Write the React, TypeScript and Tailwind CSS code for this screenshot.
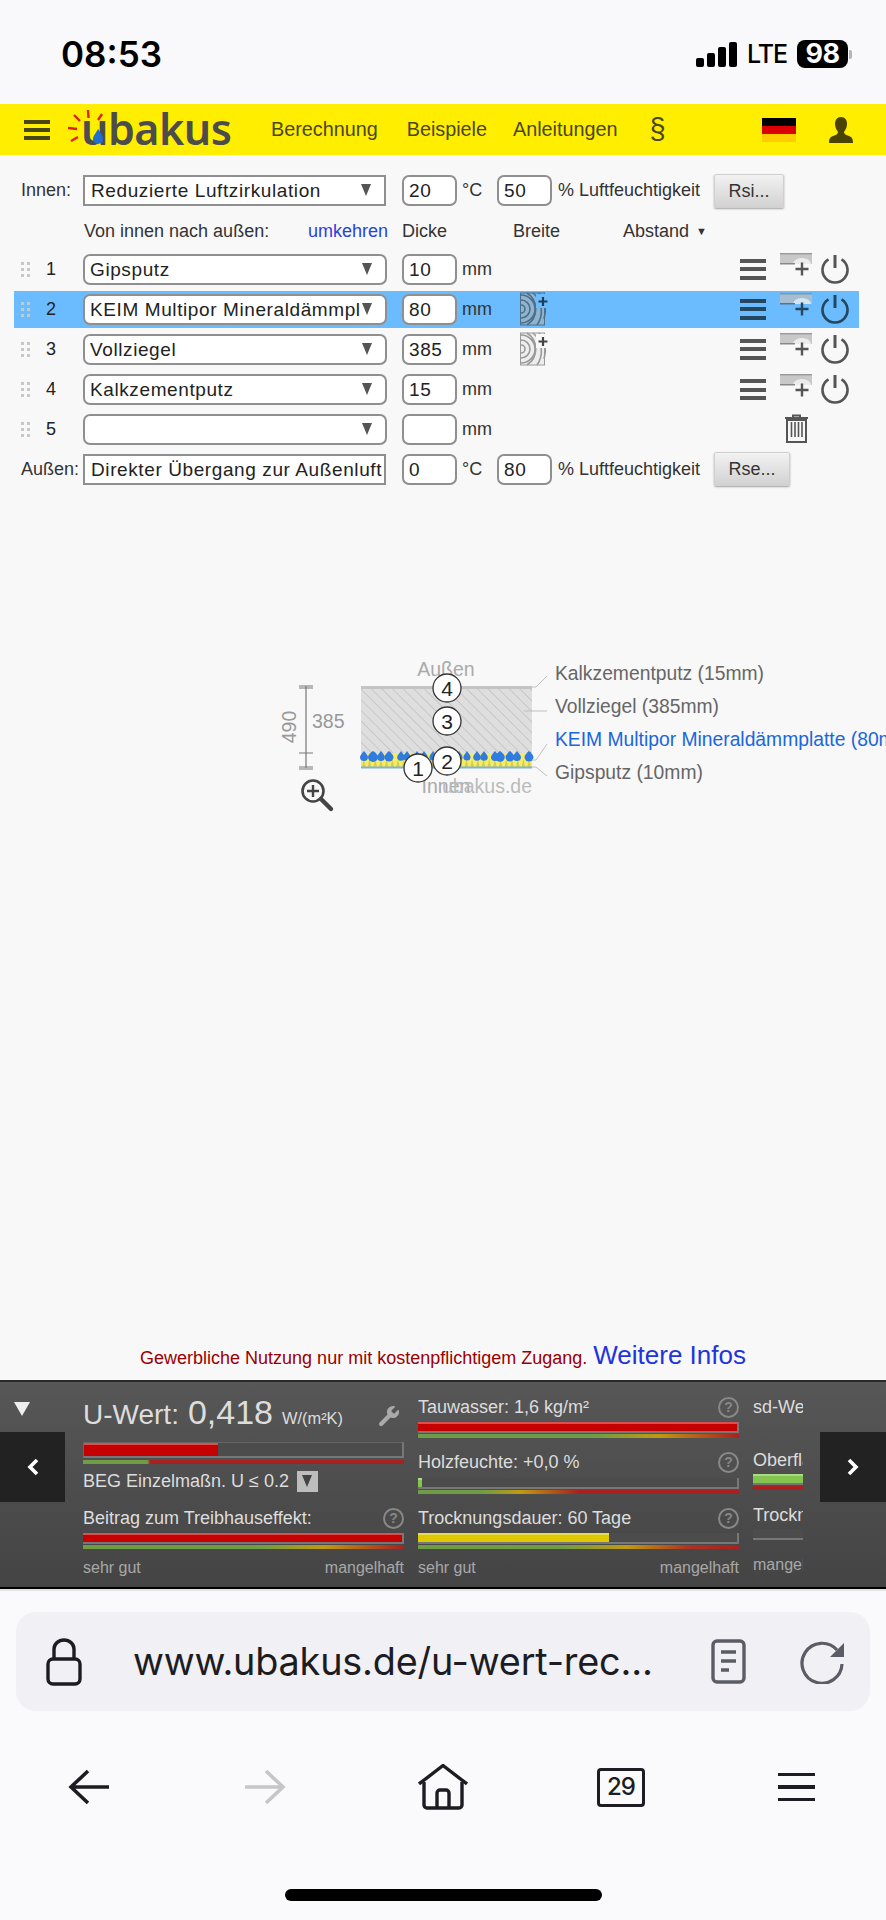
import React from "react";

const SANS = "font-['Liberation_Sans',Arial,sans-serif]";

function Dots() {
  return (
    <div className="grid grid-cols-2 gap-x-[3px] gap-y-[3px] w-[9px] ml-[7px] shrink-0">
      {[0, 1, 2, 3, 4, 5].map((i) => (
        <div key={i} className="w-[3px] h-[3px] bg-[#c8c8c8]" />
      ))}
    </div>
  );
}

function Arrow({ boxed }: { boxed?: boolean }) {
  return (
    <span
      className={`absolute w-0 h-0 border-l-[5.5px] border-r-[5.5px] border-t-[12px] border-l-transparent border-r-transparent border-t-[#555] ${
        boxed ? "right-[15px] top-[9px]" : "right-[13px] top-[7px]"
      }`}
    />
  );
}

function LayerSelect({ value }: { value: string }) {
  return (
    <div className="relative w-[304px] h-[31px] rounded-[7px] border-2 border-[#8f8f8f] bg-white pl-[5px] text-[19px] leading-[27px] tracking-[0.6px] text-[#222] whitespace-nowrap overflow-hidden shrink-0">
      {value}
      <Arrow />
    </div>
  );
}

function BoxSelect({ value }: { value: string }) {
  return (
    <div className="relative w-[303px] h-[31px] border-2 border-[#8f8f8f] bg-white pl-[6px] text-[19px] leading-[28px] tracking-[0.6px] text-[#222] whitespace-nowrap overflow-hidden shrink-0">
      {value}
    </div>
  );
}

function NumInput({ value }: { value: string }) {
  return (
    <div className="w-[55px] h-[31px] rounded-[7px] border-2 border-[#8f8f8f] bg-white pl-[5px] text-[19px] leading-[27px] tracking-[0.6px] text-[#222] shrink-0">
      {value}
    </div>
  );
}

function GrayButton({ label, w }: { label: string; w: string }) {
  return (
    <div className={`${w} h-[34px] rounded-[2px] bg-gradient-to-b from-[#f2f2f2] to-[#d2d2d2] border border-[#d0d0d0] shadow-[0_1px_2px_rgba(0,0,0,0.35)] text-center text-[18px] leading-[32px] text-[#333] shrink-0`}>
      {label}
    </div>
  );
}

function Wood({ active }: { active: boolean }) {
  const c = active ? "#4e6f88" : "#9a9a9a";
  return (
    <svg width="30" height="34" viewBox="0 0 30 34" className="shrink-0">
      <rect x="0.5" y="1" width="24" height="32" fill={active ? "#8fb4d2" : "#eeeeee"} stroke={c} />
      <path d="M1 13a4 4 0 0 1 0 8M1 8a9 9 0 0 1 0 18M1 3a14 14 0 0 1 0 28M7 1a19 19 0 0 1 0 32M13 1a24 24 0 0 1 4 32M19 1a28 28 0 0 1 5 26" fill="none" stroke={c} strokeWidth="1.6" />
      <rect x="16" y="2" width="14" height="14" fill={active ? "#6bbcff" : "#f8f8f8"} />
      <path d="M23 5v9M18.5 9.5h9" stroke={active ? "#1f3d55" : "#444"} strokeWidth="2.2" />
    </svg>
  );
}

function Actions({ active }: { active: boolean }) {
  const c = active ? "#24465f" : "#555555";
  return (
    <div className="flex items-center ml-[7px]">
      <div className="flex flex-col gap-[4.5px] w-[26px]">
        <div className={`h-[4px] ${active ? "bg-[#24465f]" : "bg-[#555]"}`} />
        <div className={`h-[4px] ${active ? "bg-[#24465f]" : "bg-[#555]"}`} />
        <div className={`h-[4px] ${active ? "bg-[#24465f]" : "bg-[#555]"}`} />
      </div>
      <svg width="32" height="28" viewBox="0 0 32 28" className="ml-[14px] -mt-[4px]">
        <rect x="0" y="0" width="32" height="11" fill={active ? "#a6bed2" : "#c8c8c8"} />
        <rect x="0" y="0" width="32" height="1.4" fill={active ? "#7d95a8" : "#999"} />
        <path d="M13 11a9 6 0 0 1 18 0z" fill={active ? "#d4e4f0" : "#ececec"} />
        <rect x="0" y="10" width="15" height="1.5" fill={active ? "#55758e" : "#888"} />
        <path d="M22 9.5v13M15.5 16h13" stroke={c} strokeWidth="2.4" />
      </svg>
      <svg width="28" height="31" viewBox="0 0 28 31" className="ml-[9px]">
        <path d="M7.5 5.3A12.5 12.5 0 1 0 20.5 5.3" fill="none" stroke={c} strokeWidth="2.6" />
        <path d="M14 1v13" stroke={c} strokeWidth="3" />
      </svg>
    </div>
  );
}

function Trash() {
  return (
    <svg width="23" height="29" viewBox="0 0 23 29" className="ml-[52px] -mt-[2px]">
      <path d="M0 4h23M8 4V1.5h7V4" stroke="#555" strokeWidth="2" fill="none" />
      <rect x="2" y="6" width="19" height="22" fill="none" stroke="#555" strokeWidth="2" />
      <path d="M6.5 8v15M10 8v15M13.5 8v15M17 8v15" stroke="#555" strokeWidth="1.6" />
    </svg>
  );
}

const rows = [
  { n: "1", name: "Gipsputz", d: "10" },
  { n: "2", name: "KEIM Multipor Mineraldämmpl", d: "80", active: true, wood: true },
  { n: "3", name: "Vollziegel", d: "385", wood: true },
  { n: "4", name: "Kalkzementputz", d: "15" },
  { n: "5", name: "", d: "", empty: true },
];

function LayerRow({ r }: { r: (typeof rows)[number] }) {
  return (
    <div className="h-[40.2px] flex items-center">
      <div className={`ml-[14px] w-[845px] h-[37px] flex items-center ${r.active ? "bg-[#6bbcff]" : ""}`}>
        <Dots />
        <div className="ml-[16px] w-[37px] shrink-0 text-[18px] text-[#222]">{r.n}</div>
        <LayerSelect value={r.name} />
        <div className="ml-[15px]"><NumInput value={r.d} /></div>
        <div className="ml-[5px] w-[51px] shrink-0 text-[18px] text-[#333]">mm</div>
        <div className="w-[220px] pl-[7px] shrink-0 h-[37px] flex items-center">
          {r.wood ? <Wood active={!!r.active} /> : null}
        </div>
        {r.empty ? <Trash /> : <Actions active={!!r.active} />}
      </div>
    </div>
  );
}

const drops: [number, number][] = [
  [364, 4], [373, 5], [381, 3.9], [389, 4.5], [401, 3.8], [407, 3.8], [417, 3.6], [424, 3.8], [433, 3.6], [459, 3.6], [467, 3.6], [477, 3.8], [484, 3.8], [495, 4], [500, 4.8], [510, 4.5], [517, 4], [529, 4.5],
];

function Circle({ x, y, t }: { x: number; y: number; t: string }) {
  return (
    <g>
      <circle cx={x} cy={y} r="14" fill="#fff" stroke="#333" strokeWidth="1.3" />
      <text x={x} y={y + 7.5} textAnchor="middle" fontSize="21" fill="#222">{t}</text>
    </g>
  );
}

function Diagram() {
  const teeth = Array.from({ length: 30 }, (_, i) => 361 + i * 5.7);
  return (
    <svg width="616" height="170" viewBox="270 650 616 170" className="ml-[270px] block" fontFamily="'Liberation Sans',Arial,sans-serif">
      <defs>
        <pattern id="hatch" width="7.5" height="7.5" patternUnits="userSpaceOnUse" patternTransform="rotate(-45)">
          <rect width="7.5" height="7.5" fill="#dedede" />
          <path d="M0 0v7.5" stroke="#bcbcbc" strokeWidth="1.3" />
        </pattern>
      </defs>
      <text x="446" y="676" textAnchor="middle" fontSize="19.5" fill="#aaa">Außen</text>
      <rect x="361" y="686" width="171" height="3" fill="#c4c4c4" />
      <rect x="361" y="689" width="171" height="64" fill="url(#hatch)" />
      <rect x="361" y="753" width="171" height="14" fill="#f4ec62" />
      {teeth.map((x) => (
        <path key={x} d={`M${x + 1} 767l1.8 -8l1.8 8z`} fill="#d8cc50" />
      ))}
      <rect x="361" y="766.5" width="171" height="2" fill="#7eb4d8" />
      {drops.map(([x, r], i) => (
        <path key={i} d={`M${x} 751C${x + r * 0.4} ${757 - r} ${x + r} ${757 - r * 0.4} ${x + r} 757a${r} ${r} 0 1 1 ${-2 * r} 0C${x - r} ${757 - r * 0.4} ${x - r * 0.4} ${757 - r} ${x} 751z`} fill="#2f7be0" />
      ))}
      <path d="M306 686v82M299 686h14M299 688h14M299 753h14M299 767h14M299 769h14" stroke="#777" strokeWidth="1.2" fill="none" />
      <text x="0" y="0" fontSize="19.5" fill="#999" textAnchor="middle" transform="translate(296 727) rotate(-90)">490</text>
      <text x="312" y="728" fontSize="19.5" fill="#999">385</text>
      <text x="446" y="793" textAnchor="middle" fontSize="19.5" fill="#aaa">Innen</text>
      <text x="532" y="793" textAnchor="end" fontSize="19.5" fill="#bbb">ubakus.de</text>
      <circle cx="313" cy="791" r="10.5" fill="none" stroke="#444" strokeWidth="2.6" />
      <path d="M313 785v12M307 791h12" stroke="#444" strokeWidth="2.4" />
      <path d="M321 799l10 10" stroke="#444" strokeWidth="4.4" strokeLinecap="round" />
      <path d="M532 687h4l11 -11M524 711h23M532 760h4l11 -16M532 767h4l11 9" stroke="#c0c0c0" strokeWidth="1" fill="none" />
      <Circle x={447} y={688} t="4" />
      <Circle x={447} y={721} t="3" />
      <Circle x={447} y={761} t="2" />
      <Circle x={418} y={768} t="1" />
      <text x="555" y="680" fontSize="19.3" fill="#666">Kalkzementputz (15mm)</text>
      <text x="555" y="713" fontSize="19.3" fill="#666">Vollziegel (385mm)</text>
      <text x="555" y="746" fontSize="19.3" fill="#1a66dd">KEIM Multipor Mineraldämmplatte (80mm)</text>
      <text x="555" y="779" fontSize="19.3" fill="#666">Gipsputz (10mm)</text>
    </svg>
  );
}

function Help() {
  return (
    <div className="w-[21px] h-[21px] rounded-full border-2 border-[#888] text-[#888] text-[14px] font-bold leading-[17px] text-center shrink-0">?</div>
  );
}

function Meter({ pct, kind, scale }: { pct: number; kind: "red" | "yellow" | "green"; scale: string }) {
  const fill =
    kind === "red"
      ? "bg-[#c40000] border-t-2 border-[#d85050]"
      : kind === "yellow"
        ? "bg-[#e0c800] border-t-2 border-[#e8dc50]"
        : "bg-[#86c452] border-t-2 border-[#a8dc80]";
  return (
    <div>
      <div className="h-[11px] w-full border-b-2 border-r-2 border-[#777] bg-[#4c4c4c]">
        <div className={`h-full ${fill}`} style={{ width: pct + "%" }} />
      </div>
      <div className={`mt-[1px] h-[4px] w-full ${scale}`} />
    </div>
  );
}

const SCALE_A = "bg-[linear-gradient(90deg,#6f9c45_0%,#6f9c45_55%,#c09a10_75%,#a82020_100%)]";
const SCALE_B = "bg-[linear-gradient(90deg,#6f9c45_0%,#6f9c45_20%,#c09a10_32%,#a82020_50%,#a82020_100%)]";
const SCALE_C = "bg-[linear-gradient(90deg,#6f9c45_0%,#6f9c45_45%,#c09a10_65%,#b03020_85%,#a82020_100%)]";

function Section({ title, pct, kind, scale }: { title: string; pct: number; kind: "red" | "yellow" | "green"; scale: string }) {
  return (
    <div className="h-[55.5px]">
      <div className="flex items-center justify-between h-[20px] mb-[5px]">
        <span className="text-[18px] text-[#ddd] whitespace-nowrap">{title}</span>
        <Help />
      </div>
      <Meter pct={pct} kind={kind} scale={scale} />
    </div>
  );
}

function Footer() {
  return (
    <div className="flex justify-between text-[16px] leading-[20px] text-[#a8a8a8] -mt-[6px]">
      <span>sehr gut</span>
      <span>mangelhaft</span>
    </div>
  );
}

function ColOne() {
  return (
    <div className="w-[321px] shrink-0">
      <div className="h-[111px] flow-root">
        <div className="flex items-baseline h-[40px] relative -mt-[10px] text-[#ddd] whitespace-nowrap">
          <span className="text-[28px]">U-Wert:</span>
          <span className="text-[34px] ml-[9px]">0,418</span>
          <span className="text-[16.4px] ml-[9px]">W/(m²K)</span>
          <svg width="24" height="24" viewBox="0 0 24 24" className="absolute right-[3px] top-[17px]">
            <path d="M14.7 6.3a1 1 0 0 0 0 1.4l1.6 1.6a1 1 0 0 0 1.4 0l3.77-3.77a6 6 0 0 1-7.94 7.94l-7.91 7.91a2.12 2.12 0 0 1-3-3l7.91-7.91a6 6 0 0 1 7.94-7.94l-3.76 3.76z" fill="#aaa" />
          </svg>
        </div>
        <div className="mt-[15px]">
          <div className="h-[16px] w-full border border-[#666] border-b-2 border-r-2 border-b-[#777] border-r-[#777] bg-[#4c4c4c]">
            <div className="h-full bg-[#c40000] border-t-2 border-[#d85050] w-[42%]" />
          </div>
          <div className="mt-[2px] h-[4px] w-full bg-[linear-gradient(90deg,#6f9c45_0%,#6f9c45_20%,#a82020_21%,#a82020_100%)]" />
        </div>
        <div className="flex items-center h-[22px] mt-[6px] text-[18px] text-[#ddd]">
          <span className="whitespace-nowrap">BEG Einzelmaßn. U ≤ 0.2</span>
          <div className="ml-[8px] w-[21px] h-[21px] bg-[#bdbdbd] flex items-center justify-center">
            <div className="w-0 h-0 border-l-[5px] border-r-[5px] border-t-[12px] border-l-transparent border-r-transparent border-t-[#444]" />
          </div>
        </div>
      </div>
      <Section title="Beitrag zum Treibhauseffekt:" pct={100} kind="red" scale={SCALE_A} />
      <Footer />
    </div>
  );
}

function ColTwo() {
  return (
    <div className="w-[321px] shrink-0">
      <Section title="Tauwasser: 1,6 kg/m²" pct={100} kind="red" scale={SCALE_A} />
      <Section title="Holzfeuchte: +0,0 %" pct={1.2} kind="green" scale={SCALE_B} />
      <Section title="Trocknungsdauer: 60 Tage" pct={60} kind="yellow" scale={SCALE_C} />
      <Footer />
    </div>
  );
}

function ColThree() {
  return (
    <div className="w-[200px] shrink-0 text-[18px] text-[#ddd] whitespace-nowrap">
      <div className="h-[53px] leading-[20px]">sd-Wert</div>
      <div className="h-[55px]">
        <div className="h-[20px] leading-[20px] mb-[4px]">Oberfläche</div>
        <Meter pct={100} kind="green" scale="bg-[#a82020]" />
      </div>
      <div className="h-[50px]">
        <div className="h-[20px] leading-[20px] mb-[4px]">Trocknung</div>
        <div className="h-[11px] w-full border-b-2 border-[#777] bg-[#4c4c4c]" />
      </div>
      <div className="text-[16px] leading-[20px] text-[#a8a8a8]">mangelhaft</div>
    </div>
  );
}

function Panel() {
  return (
    <div className="relative h-[209px] shrink-0 border-t-2 border-t-[#2a2a2a] border-b-2 border-b-black bg-gradient-to-b from-[#575757] to-[#444444]">
      <div className="ml-[83px] w-[720px] h-full pt-[15px] overflow-hidden flex gap-[14px]">
        <ColOne />
        <ColTwo />
        <ColThree />
      </div>
      <div className="absolute left-[14px] top-[20px] w-0 h-0 border-l-[8px] border-r-[8px] border-t-[14px] border-l-transparent border-r-transparent border-t-[#eee]" />
      <div className="absolute left-0 top-[50px] w-[65px] h-[70px] bg-[#222] flex items-center justify-center">
        <svg width="12" height="18" viewBox="0 0 12 18"><path d="M10 2L3 9l7 7" fill="none" stroke="#fff" strokeWidth="3.6" /></svg>
      </div>
      <div className="absolute right-0 top-[50px] w-[66px] h-[70px] bg-[#222] flex items-center justify-center">
        <svg width="12" height="18" viewBox="0 0 12 18"><path d="M2 2l7 7-7 7" fill="none" stroke="#fff" strokeWidth="3.6" /></svg>
      </div>
    </div>
  );
}

function StatusBar() {
  return (
    <div className="h-[104px] shrink-0 bg-[#f9f9fb] flex items-center pt-[4px] pl-[61px] relative">
      <span className="font-['Inter',sans-serif] font-semibold text-[35px] text-black">08:53</span>
      <div className="ml-auto mr-[34px] flex items-center">
        <div className="flex items-end gap-[3px] h-[25px]">
          <div className="w-[8px] h-[9px] rounded-[2px] bg-black" />
          <div className="w-[8px] h-[14px] rounded-[2px] bg-black" />
          <div className="w-[8px] h-[20px] rounded-[2px] bg-black" />
          <div className="w-[8px] h-[25px] rounded-[2px] bg-black" />
        </div>
        <span className="ml-[10px] text-[25px] font-medium leading-none text-black font-['Inter',sans-serif] tracking-[-1px] w-[50px]">LTE</span>
        <div className="w-[51px] h-[28px] rounded-[8px] bg-black text-white text-center text-[27px] font-bold leading-[28px] font-['Inter',sans-serif] tracking-[-0.5px]">98</div>
        <div className="ml-[1px] w-[3px] h-[9px] rounded-r-[2px] bg-[#b5b5b5]" />
      </div>
    </div>
  );
}

function Logo() {
  return (
    <div className="relative w-[162px] h-[51px] ml-[18px] shrink-0">
      <span className="absolute left-[13px] top-[-5px] text-[43px] font-semibold leading-[60px] tracking-[-0.5px] text-[#4c4c4c] font-['Noto_Sans',sans-serif]">ubakus</span>
      <svg width="60" height="51" viewBox="68 104 60 51" className="absolute left-0 top-0">
        <path d="M88 110l0.5 8M74 115l6 6M102 114l-4 6M68 128l9 1M71 141l7-4" stroke="#e0201a" strokeWidth="2.4" />
        <path d="M98 129c3 4 5 7 5 10a5 5 0 0 1-10 0c0-3 3-6 5-10z" fill="#1f6fd0" />
      </svg>
    </div>
  );
}

function Header() {
  return (
    <div className="h-[51px] shrink-0 bg-[#ffee00] flex items-center text-[#4a4620] text-[19.8px]">
      <div className="ml-[24px] w-[26px] flex flex-col gap-[4px] shrink-0">
        <div className="h-[4px] bg-[#4a4610]" />
        <div className="h-[4px] bg-[#4a4610]" />
        <div className="h-[4px] bg-[#4a4610]" />
      </div>
      <Logo />
      <span className="ml-[41px]">Berechnung</span>
      <span className="ml-[29px]">Beispiele</span>
      <span className="ml-[26px]">Anleitungen</span>
      <span className="ml-[32px] text-[29px] leading-none">§</span>
      <div className="ml-[96px] w-[34px] h-[24px] flex flex-col shrink-0">
        <div className="h-[8px] bg-black" />
        <div className="h-[8px] bg-[#dd0000]" />
        <div className="h-[8px] bg-[#ffce00]" />
      </div>
      <svg width="26" height="26" viewBox="0 0 26 26" className="ml-[32px]">
        <path d="M13 0c4 0 6 3 6 7 0 3-1.5 6-3 8 0 2 2 3 5 4 3 1 4 3 4 7H1c0-4 1-6 4-7 3-1 5-2 5-4-1.5-2-3-5-3-8 0-4 2-7 6-7z" fill="#4a4400" />
      </svg>
    </div>
  );
}

function Form() {
  return (
    <div className="text-[18px] text-[#333]">
      <div className="pt-[20px] flex items-center h-[51px] pl-[21px]">
        <span className="w-[62px] shrink-0">Innen:</span>
        <div className="relative">
          <BoxSelect value="Reduzierte Luftzirkulation" />
          <Arrow boxed />
        </div>
        <div className="ml-[16px]"><NumInput value="20" /></div>
        <span className="ml-[5px] w-[35px] shrink-0">°C</span>
        <NumInput value="50" />
        <span className="ml-[6px] w-[156px] shrink-0 whitespace-nowrap">% Luftfeuchtigkeit</span>
        <GrayButton label="Rsi..." w="w-[70px]" />
      </div>
      <div className="h-[43px] pt-[7px] flex items-center whitespace-nowrap">
        <span className="ml-[84px] w-[224px] shrink-0">Von innen nach außen:</span>
        <span className="w-[94px] shrink-0 text-[#2a3fe0]">umkehren</span>
        <span className="w-[111px] shrink-0">Dicke</span>
        <span className="w-[110px] shrink-0">Breite</span>
        <span>Abstand</span>
        <span className="ml-[7px] text-[11px]">▼</span>
      </div>
      {rows.map((r) => <LayerRow key={r.n} r={r} />)}
      <div className="h-[39px] flex items-center pl-[21px]">
        <span className="w-[62px] shrink-0">Außen:</span>
        <BoxSelect value="Direkter Übergang zur Außenluft" />
        <div className="ml-[16px]"><NumInput value="0" /></div>
        <span className="ml-[5px] w-[35px] shrink-0">°C</span>
        <NumInput value="80" />
        <span className="ml-[6px] w-[156px] shrink-0 whitespace-nowrap">% Luftfeuchtigkeit</span>
        <GrayButton label="Rse..." w="w-[76px]" />
      </div>
    </div>
  );
}

function Browser() {
  return (
    <div className="flex-1 border-t-2 border-[#e4e4e8] bg-[#fafafc] flex flex-col">
      <div className="mt-[21px] mx-[16px] h-[99px] rounded-[20px] bg-[#f0f0f5] flex items-center pl-[30px] pr-[24px]">
        <svg width="36" height="48" viewBox="0 0 36 48" className="shrink-0">
          <rect x="2" y="21" width="32" height="25" rx="5" fill="none" stroke="#1c1c22" strokeWidth="3.4" />
          <path d="M8 21V11a10 9 0 0 1 20 0v10" fill="none" stroke="#1c1c22" strokeWidth="3.4" />
        </svg>
        <span className="ml-[51px] font-['Inter',sans-serif] text-[37.8px] text-[#1c1c22] whitespace-nowrap w-[578px] shrink-0 tracking-[-0.2px]">www.ubakus.de/u-wert-rec...</span>
        <svg width="35" height="45" viewBox="0 0 35 45" className="shrink-0">
          <rect x="2" y="2" width="31" height="41" rx="4" fill="none" stroke="#5c5c66" strokeWidth="3.4" />
          <path d="M10 13h15M10 22h15M10 31h8" stroke="#5c5c66" strokeWidth="3.6" />
        </svg>
        <svg width="46" height="44" viewBox="0 0 46 44" className="ml-[54px] shrink-0">
          <path d="M37 10A20 20 0 1 0 42 24" fill="none" stroke="#5c5c66" strokeWidth="3.2" />
          <path d="M44 3v14H30z" fill="#5c5c66" />
        </svg>
      </div>
      <div className="mt-[53px] flex items-center h-[46px] relative">
        <svg width="42" height="36" viewBox="0 0 42 36" className="ml-[68px] shrink-0">
          <path d="M20 2L3 18l17 16M3 18h38" fill="none" stroke="#1c1c22" strokeWidth="3.6" />
        </svg>
        <svg width="42" height="36" viewBox="0 0 42 36" className="ml-[134px] shrink-0">
          <path d="M22 2l17 16-17 16M39 18H1" fill="none" stroke="#c6c6c8" strokeWidth="3.6" />
        </svg>
        <svg width="50" height="46" viewBox="0 0 50 46" className="ml-[132px] shrink-0">
          <path d="M1 20L25 1.5 49 20" fill="none" stroke="#1c1c22" strokeWidth="3.4" strokeLinejoin="round" />
          <path d="M6 18v23a3 3 0 0 0 3 3h32a3 3 0 0 0 3-3V18" fill="none" stroke="#1c1c22" strokeWidth="3.4" />
          <path d="M19 44V29a3 3 0 0 1 3-3h6a3 3 0 0 1 3 3v15" fill="none" stroke="#1c1c22" strokeWidth="3.4" />
        </svg>
        <div className="ml-[129px] w-[48px] h-[39px] rounded-[4px] border-[3px] border-[#1c1c22] text-center text-[24px] leading-[32px] font-['Inter',sans-serif] font-medium tracking-[-1px] text-[#1c1c22] shrink-0">29</div>
        <div className="ml-[133px] w-[37px] flex flex-col gap-[9px] shrink-0">
          <div className="h-[3.5px] bg-[#1c1c22]" />
          <div className="h-[3.5px] bg-[#1c1c22]" />
          <div className="h-[3.5px] bg-[#1c1c22]" />
        </div>
      </div>
      <div className="mt-[79px] ml-[285px] w-[317px] h-[12px] rounded-full bg-black" />
    </div>
  );
}

export default function App() {
  return (
    <div className={`${SANS} w-[886px] h-[1920px] flex flex-col overflow-hidden bg-[#f8f8f8]`}>
      <StatusBar />
      <Header />
      <div className="h-[1225px] shrink-0 flex flex-col bg-[#f8f8f8]">
        <Form />
        <div className="mt-[161px]"><Diagram /></div>
        <div className="mt-auto h-[44px] text-center whitespace-nowrap text-[18px] text-[#990000]">
          Gewerbliche Nutzung nur mit kostenpflichtigem Zugang.
          <span className="ml-[6px] text-[26px] text-[#2233dd]">Weitere Infos</span>
        </div>
      </div>
      <Panel />
      <Browser />
    </div>
  );
}
